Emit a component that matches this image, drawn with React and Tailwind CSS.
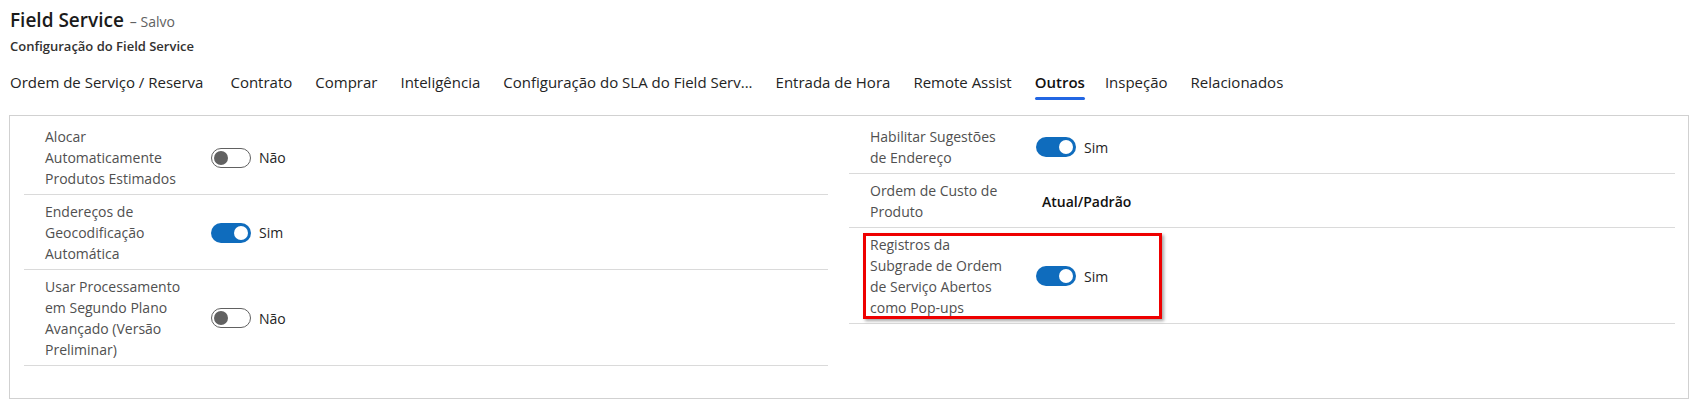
import { useState } from 'react';

// タブ一覧
const tabs = [
    'Ordem de Serviço / Reserva',
    'Contrato',
    'Comprar',
    'Inteligência',
    'Configuração do SLA do Field Serv...',
    'Entrada de Hora',
    'Remote Assist',
    'Outros',
    'Inspeção',
    'Relacionados',
];

function Toggle({ on }) {
    return (
        <div className="flex items-center">
            {on ? (
                <div className="w-[40px] h-[20px] rounded-full bg-[#0f6cbd] flex items-center justify-end pr-[3px]">
                    <div className="w-[14px] h-[14px] rounded-full bg-white" />
                </div>
            ) : (
                <div className="w-[40px] h-[20px] rounded-full border border-[#616161] bg-white flex items-center pl-[2px]">
                    <div className="w-[14px] h-[14px] rounded-full bg-[#616161]" />
                </div>
            )}
            <span className="ml-[8px] text-[14px] text-[#242424]">{on ? 'Sim' : 'Não'}</span>
        </div>
    );
}

function Row({ lines, children, highlight }) {
    return (
        <div className="relative flex items-center border-b border-[#dadada] pt-[6px] pb-[5px]">
            <div className="w-[187px] shrink-0 pl-[21px] pr-[30px] text-[14px] leading-[21px] text-[#505050]">
                {lines.map((l) => (
                    <div key={l}>{l}</div>
                ))}
            </div>
            {children}
            {/* 赤枠の強調表示 */}
            {highlight && (
                <div className="absolute left-[14px] top-[5px] w-[299px] h-[86px] border-[3px] border-[#ee0000] shadow-[2px_2px_3px_rgba(0,0,0,0.35)]" />
            )}
        </div>
    );
}

export default function App() {
    const [active] = useState('Outros');

    return (
        <div className="w-[1692px] h-[408px] bg-white font-['Open_Sans',sans-serif] text-[#242424]">
            {/* ヘッダー */}
            <div className="pl-[10px] pt-[6px]">
                <div className="flex items-baseline leading-[28px]">
                    <span className="text-[19px] font-semibold text-[#1b1b1b]">Field Service</span>
                    <span className="ml-[6px] text-[14px] text-[#616161]">– Salvo</span>
                </div>
                <div className="mt-[1px] text-[13px] leading-[18px] font-semibold text-[#323130]">
                    Configuração do Field Service
                </div>
            </div>

            {/* タブ */}
            <div className="flex pl-[10px] mt-[16px]">
                {tabs.map((t, i) => (
                    <div
                        key={t}
                        className={`flex flex-col ${i === 0 ? 'mr-[27px]' : t === active ? 'mr-[20px]' : 'mr-[23px]'}`}
                    >
                        <span className={`text-[15px] leading-[22px] ${t === active ? 'font-semibold text-[#111]' : 'text-[#242424]'}`}>
                            {t}
                        </span>
                        <div className={`mt-[4px] h-[3px] rounded-full ${t === active ? 'bg-[#2266e3]' : 'bg-transparent'}`} />
                    </div>
                ))}
            </div>

            {/* 設定パネル */}
            <div className="ml-[9px] mt-[15px] w-[1680px] h-[284px] border border-[#d1d1d1] pt-[4px] pl-[14px] pr-[13px] flex gap-[21px]">
                <div className="w-[804px] shrink-0">
                    <Row lines={['Alocar', 'Automaticamente', 'Produtos Estimados']}>
                        <Toggle on={false} />
                    </Row>
                    <Row lines={['Endereços de', 'Geocodificação', 'Automática']}>
                        <Toggle on />
                    </Row>
                    <Row lines={['Usar Processamento', 'em Segundo Plano', 'Avançado (Versão', 'Preliminar)']}>
                        <Toggle on={false} />
                    </Row>
                </div>
                <div className="flex-1">
                    <Row lines={['Habilitar Sugestões', 'de Endereço']}>
                        <Toggle on />
                    </Row>
                    <Row lines={['Ordem de Custo de', 'Produto']}>
                        <span className="pl-[6px] text-[14px] font-semibold text-[#111]">Atual/Padrão</span>
                    </Row>
                    <Row highlight lines={['Registros da', 'Subgrade de Ordem', 'de Serviço Abertos', 'como Pop-ups']}>
                        <Toggle on />
                    </Row>
                </div>
            </div>
        </div>
    );
}
